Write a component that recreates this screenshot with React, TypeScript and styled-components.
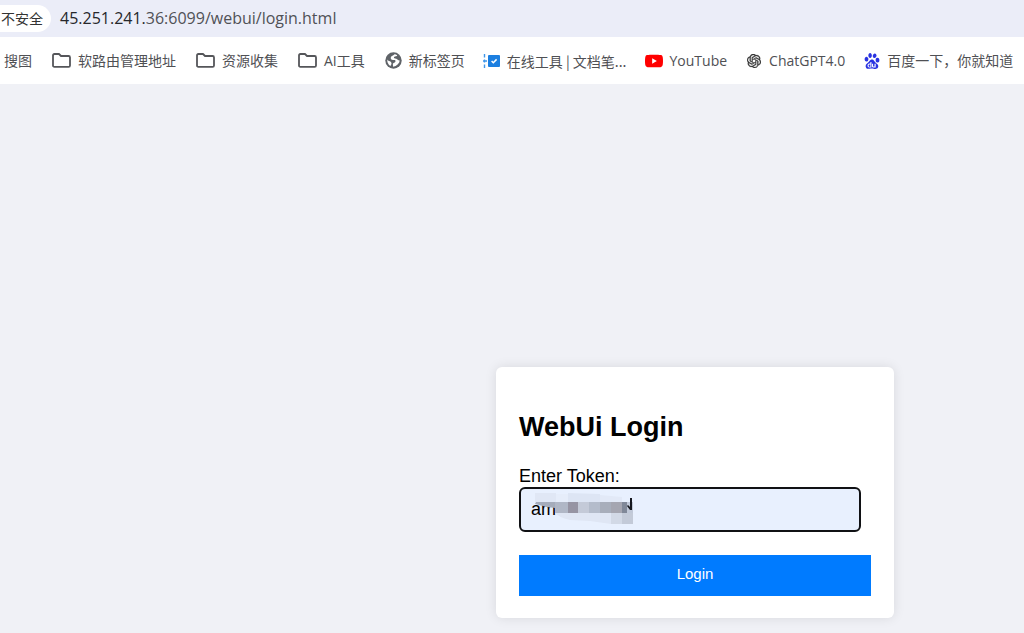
import React, { useState } from "react";
import styled, { createGlobalStyle } from "styled-components";
import { SiOpenai, SiBaidu, SiYoutube } from "react-icons/si";

const GlobalStyle = createGlobalStyle`
  * { box-sizing: border-box; }
  body { margin: 0; background: #f0f1f6; }
`;

const Page = styled.div`
  min-height: 100vh;
  display: flex;
  flex-direction: column;
  overflow-x: hidden;
  font-family: "Open Sans", "Noto Sans CJK SC", sans-serif;
`;

const AddressBar = styled.header`
  display: flex;
  align-items: center;
  gap: 9px;
  height: 37px;
  background: #ebedf8;
`;

const SecurityChip = styled.button`
  height: 27px;
  padding: 0 8px 0 1px;
  border: 0;
  border-radius: 0 14px 14px 0;
  background: #fff;
  color: #333;
  font: 14px/27px "Noto Sans CJK SC", sans-serif;
`;

const Address = styled.span`
  padding-bottom: 2px;
  color: #505156;
  font-size: 16px;
  line-height: 24px;
`;

const Host = styled.span`
  color: #26272b;
`;

const Bookmarks = styled.nav`
  display: flex;
  align-items: center;
  gap: 20px;
  height: 47px;
  padding-left: 4px;
  background: #fff;
`;

const BookmarkGroup = styled.div<{ $gap: number }>`
  display: flex;
  gap: ${(p) => p.$gap}px;
`;

const Bookmark = styled.a<{ $compact?: boolean }>`
  display: flex;
  flex: none;
  align-items: center;
  gap: 7px;
  color: #4f5054;
  font-family: ${(p) =>
    p.$compact ? '"Noto Sans CJK SC", sans-serif' : '"Open Sans", "Noto Sans CJK SC", sans-serif'};
  font-size: 14px;
  line-height: 20px;
  white-space: nowrap;
  text-decoration: none;
`;

const IconSlot = styled.span<{ $width: number }>`
  display: flex;
  justify-content: center;
  width: ${(p) => p.$width}px;
`;

const Main = styled.main`
  flex: 1;
  display: flex;
  align-items: flex-end;
  justify-content: flex-end;
  padding: 24px 130px 15px 24px;
`;

const Card = styled.form`
  width: 398px;
  padding: 44px 23px 22px;
  border-radius: 6px;
  background: #fff;
  box-shadow: 0 0 12px rgba(0, 0, 0, 0.1);
  font-family: "Liberation Sans", Arial, sans-serif;
`;

const Title = styled.h1`
  margin: 0 0 22px;
  font-size: 27px;
  line-height: 33px;
`;

const Label = styled.label`
  display: block;
  font-size: 18px;
  line-height: 21px;
`;

const Field = styled.div`
  position: relative;
  margin-right: 10px;
`;

const TokenInput = styled.input`
  display: block;
  width: 100%;
  height: 45px;
  padding: 0 10px;
  border: 2px solid #101114;
  border-radius: 6px;
  outline: 0;
  background: #e8f0fe;
  font: 18px "Liberation Sans", Arial, sans-serif;
`;

const Mosaic = styled.svg`
  position: absolute;
  left: 16px;
  top: 5px;
  pointer-events: none;
`;

const LoginButton = styled.button`
  display: block;
  width: 100%;
  height: 41px;
  margin-top: 23px;
  padding: 0 0 4px;
  border: 0;
  background: #007bff;
  color: #fff;
  font: 15px "Liberation Sans", Arial, sans-serif;
`;

const FolderIcon = () => (
  <svg width="19" height="15" viewBox="0 0 19 15" fill="none" stroke="#55565a" strokeWidth="1.8" strokeLinejoin="round">
    <path d="M1 2.4Q1 1 2.4 1H7l2 2h7.600Q18 3 18 4.400V12.400Q18 13.800 16.600 13.800H2.400Q1 13.800 1 12.400Z" />
  </svg>
);

const GlobeIcon = () => (
  <svg width="17" height="17" viewBox="0 0 17 17">
    <circle cx="8.500" cy="8.500" r="8.200" fill="#5f6368" />
    <path
      d="M9.600 2.300Q8.400 3.600 7 4.100 5.600 4.600 5.700 6.200 5.900 7.800 7.800 7.900L9.800 8.100Q10.800 8.500 10.400 9.700 9.900 10.700 8.600 10.900 7.500 11.400 7.900 13L8.200 14.700Q10.800 14.300 12.600 12.500 14.800 10.600 14.700 8.600 13.400 8.600 12.400 7.600 11.500 6.500 10 6.400 8.600 6.200 8.900 5.200 9.500 4.200 11 4.200 12 4 12.200 3.200Q11 2.400 9.600 2.300ZM2.300 7.400Q1.900 10 3.500 12.200 4.300 13.200 5.400 13.900 6.600 12.600 6.500 11.200 6.300 9.800 4.900 9.300 3.200 8.800 2.300 7.400Z"
      fill="#fff"
    />
  </svg>
);

const ToolIcon = () => (
  <svg width="17" height="14" viewBox="0 0 17 14">
    <rect x="5" y="1" width="12" height="12" rx="1" fill="#1c7fe0" />
    <path d="M1.500 0v3.500M1.500 10.500V14M1.500 5.500v3M0 7h4" stroke="#3f97ea" strokeWidth="1.400" />
    <path d="m8.600 7 1.700 1.700 3.300-3.300" fill="none" stroke="#fff" strokeWidth="1.500" />
  </svg>
);

const MOSAIC_CELLS = [
  [20, 13, "#b0b7c6"],
  [33, 10, "#9694a3"],
  [43, 11, "#c4cad8"],
  [54, 11, "#b4bccb"],
  [65, 11, "#a8aebb"],
  [76, 11, "#a5a6b1"],
  [87, 5, "#808898"],
  [92, 6, "#c0c8d8"],
] as const;

const TokenMosaic = () => (
  <Mosaic width="99" height="33" viewBox="0 0 99 33" aria-hidden="true">
    <path d="M0 1h21v9H0z" fill="#e0e7f5" />
    <path d="M21 2h12v8H21z" fill="#e6edfa" />
    <path d="M33 1l32 1v8H33z" fill="#dde5f4" />
    <path d="M65 3l22 2v5H65z" fill="#e2e9f7" />
    <path d="M20 21h56v11l-21-3-20-1Q25 26 20 21Z" fill="#dfe6f4" />
    <path d="M76 21h11v11H76z" fill="#d2d9e6" />
    <path d="M87 17h11v15H87z" fill="#c3cad8" />
    <path d="M1 10h19v6L12 15 0 12Z" fill="#a5acbb" />
    {MOSAIC_CELLS.map(([x, width, fill]) => (
      <rect key={x} x={x} y="10" width={width} height="11" fill={fill} />
    ))}
    <path d="M95 6h2v12h-2l-3-4 1-1 2 2z" fill="#16181f" />
  </Mosaic>
);

const folders = ["软路由管理地址", "资源收集", "AI工具"];

const sites = [
  { label: "新标签页", icon: <GlobeIcon />, slot: 17 },
  { label: "在线工具 | 文档笔...", icon: <ToolIcon />, slot: 17, compact: true },
  { label: "YouTube", icon: <SiYoutube size={18} color="#f00" />, slot: 18 },
  { label: "ChatGPT4.0", icon: <SiOpenai size={14} color="#333" stroke="#333" strokeWidth={0.6} />, slot: 17 },
  { label: "百度一下，你就知道", icon: <SiBaidu size={16} color="#2932e1" />, slot: 17 },
];

export default function App() {
  const [token, setToken] = useState("am");
  return (
    <Page>
      <GlobalStyle />
      <AddressBar>
        <SecurityChip type="button">不安全</SecurityChip>
        <Address>
          <Host>45.251.241.</Host>36:6099/webui/login.html
        </Address>
      </AddressBar>
      <Bookmarks>
        <BookmarkGroup $gap={19}>
          <Bookmark href="#">搜图</Bookmark>
          {folders.map((label) => (
            <Bookmark href="#" key={label}>
              <IconSlot $width={20}>
                <FolderIcon />
              </IconSlot>
              {label}
            </Bookmark>
          ))}
        </BookmarkGroup>
        <BookmarkGroup $gap={18}>
          {sites.map((s) => (
            <Bookmark href="#" key={s.label} $compact={s.compact}>
              <IconSlot $width={s.slot}>{s.icon}</IconSlot>
              {s.label}
            </Bookmark>
          ))}
        </BookmarkGroup>
      </Bookmarks>
      <Main>
        <Card onSubmit={(e) => e.preventDefault()}>
          <Title>WebUi Login</Title>
          <Label htmlFor="token">Enter Token:</Label>
          <Field>
            <TokenInput id="token" value={token} onChange={(e) => setToken(e.target.value)} />
            <TokenMosaic />
          </Field>
          <LoginButton type="submit">Login</LoginButton>
        </Card>
      </Main>
    </Page>
  );
}
